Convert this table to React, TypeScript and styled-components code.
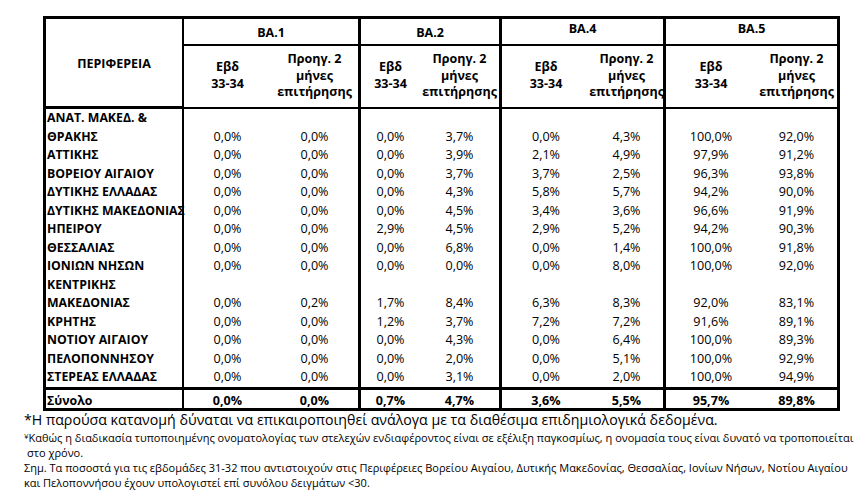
import React from "react";
import styled, { createGlobalStyle, css } from "styled-components";

const GlobalStyle = createGlobalStyle`
  html, body { margin: 0; padding: 0; background: #ffffff; }
  body { font-family: "Open Sans", "Noto Sans", sans-serif; color: #000; }
  * { box-sizing: border-box; }
`;

const Page = styled.div`
  width: 862px;
  height: 496px;
  overflow: hidden;
  padding-top: 16px;
`;

const Table = styled.div`
  margin-left: 43px;
  width: 797px;
  border: 3px solid #000;
  display: grid;
  grid-template-columns: 138px 87px 87px 62px 79px 91px 73px 93px 81px;
  font-size: 12.5px;
`;

const groupBorder = css<{ $start?: boolean }>`
  ${(p) => p.$start && "border-left: 3px solid #000;"}
`;

const RegionHead = styled.div`
  grid-row: span 2;
  border-right: 2px solid #000;
  border-bottom: 3px solid #000;
  display: flex;
  align-items: center;
  justify-content: center;
  font-weight: 700;
  padding-top: 2px;
`;

const GroupHead = styled.div<{ $start?: boolean; $raised?: boolean }>`
  grid-column: span 2;
  height: 27px;
  border-bottom: 2px solid #000;
  ${groupBorder}
  text-align: center;
  font-weight: 700;
  line-height: 20px;
  padding-top: ${(p) => (p.$raised ? "0px" : "4px")};
`;

const SubHead = styled.div<{ $start?: boolean }>`
  height: 63px;
  border-bottom: 2px solid #000;
  ${groupBorder}
  display: flex;
  align-items: center;
  justify-content: center;
  text-align: center;
  font-weight: 700;
  line-height: 16.7px;
  white-space: pre-line;
  padding-bottom: 1px;
`;

const RegionCell = styled.div<{ $total?: boolean }>`
  border-right: 2px solid #000;
  font-weight: 700;
  font-size: 12.3px;
  white-space: pre;
  overflow: visible;
  padding-left: 1px;
  ${(p) =>
    p.$total
      ? css`
          border-top: 3px solid #000;
          height: 21px;
          padding-top: 3px;
          line-height: 15px;
        `
      : css`
          line-height: 18.5px;
        `}
`;

const ValueCell = styled.div<{ $start?: boolean; $total?: boolean }>`
  ${groupBorder}
  display: flex;
  align-items: flex-end;
  justify-content: center;
  font-size: 12.6px;
  ${(p) =>
    p.$total
      ? css`
          border-top: 3px solid #000;
          height: 21px;
          padding-top: 3px;
          line-height: 15px;
          font-weight: 700;
        `
      : css`
          line-height: 18.5px;
        `}
`;

const Notes = styled.div`
  padding-left: 24px;
  white-space: nowrap;
`;

const Note = styled.div<{ $large?: boolean; $indent?: number }>`
  font-size: ${(p) => (p.$large ? "14.2px" : "11px")};
  line-height: ${(p) => (p.$large ? "17px" : "15px")};
  padding-left: ${(p) => p.$indent ?? 0}px;
`;

const Mark = styled.span`
  font-size: 8px;
  vertical-align: 3px;
`;

const groups = [
  { label: "ΒΑ.1", raised: false },
  { label: "ΒΑ.2", raised: false },
  { label: "ΒΑ.4", raised: true },
  { label: "ΒΑ.5", raised: true },
];

const rows: string[][] = [
  ["ΑΝΑΤ. ΜΑΚΕΔ. &\nΘΡΑΚΗΣ", "0,0%", "0,0%", "0,0%", "3,7%", "0,0%", "4,3%", "100,0%", "92,0%"],
  ["ΑΤΤΙΚΗΣ", "0,0%", "0,0%", "0,0%", "3,9%", "2,1%", "4,9%", "97,9%", "91,2%"],
  ["ΒΟΡΕΙΟΥ ΑΙΓΑΙΟΥ", "0,0%", "0,0%", "0,0%", "3,7%", "3,7%", "2,5%", "96,3%", "93,8%"],
  ["ΔΥΤΙΚΗΣ ΕΛΛΑΔΑΣ", "0,0%", "0,0%", "0,0%", "4,3%", "5,8%", "5,7%", "94,2%", "90,0%"],
  ["ΔΥΤΙΚΗΣ ΜΑΚΕΔΟΝΙΑΣ", "0,0%", "0,0%", "0,0%", "4,5%", "3,4%", "3,6%", "96,6%", "91,9%"],
  ["ΗΠΕΙΡΟΥ", "0,0%", "0,0%", "2,9%", "4,5%", "2,9%", "5,2%", "94,2%", "90,3%"],
  ["ΘΕΣΣΑΛΙΑΣ", "0,0%", "0,0%", "0,0%", "6,8%", "0,0%", "1,4%", "100,0%", "91,8%"],
  ["ΙΟΝΙΩΝ ΝΗΣΩΝ", "0,0%", "0,0%", "0,0%", "0,0%", "0,0%", "8,0%", "100,0%", "92,0%"],
  ["ΚΕΝΤΡΙΚΗΣ\nΜΑΚΕΔΟΝΙΑΣ", "0,0%", "0,2%", "1,7%", "8,4%", "6,3%", "8,3%", "92,0%", "83,1%"],
  ["ΚΡΗΤΗΣ", "0,0%", "0,0%", "1,2%", "3,7%", "7,2%", "7,2%", "91,6%", "89,1%"],
  ["ΝΟΤΙΟΥ ΑΙΓΑΙΟΥ", "0,0%", "0,0%", "0,0%", "4,3%", "0,0%", "6,4%", "100,0%", "89,3%"],
  ["ΠΕΛΟΠΟΝΝΗΣΟΥ", "0,0%", "0,0%", "0,0%", "2,0%", "0,0%", "5,1%", "100,0%", "92,9%"],
  ["ΣΤΕΡΕΑΣ ΕΛΛΑΔΑΣ", "0,0%", "0,0%", "0,0%", "3,1%", "0,0%", "2,0%", "100,0%", "94,9%"],
];

const total = ["Σύνολο", "0,0%", "0,0%", "0,7%", "4,7%", "3,6%", "5,5%", "95,7%", "89,8%"];

const isStart = (i: number) => i === 2 || i === 4 || i === 6;

export default function App() {
  return (
    <>
      <GlobalStyle />
      <Page>
        <Table>
          <RegionHead>ΠΕΡΙΦΕΡΕΙΑ</RegionHead>
          {groups.map((g, i) => (
            <GroupHead key={g.label} $start={i > 0} $raised={g.raised}>
              {g.label}
            </GroupHead>
          ))}
          {groups.map((g, i) => (
            <React.Fragment key={g.label + "s"}>
              <SubHead $start={i > 0}>{"Εβδ\n33-34"}</SubHead>
              <SubHead>{"Προηγ. 2\nμήνες\nεπιτήρησης"}</SubHead>
            </React.Fragment>
          ))}
          {rows.map((r) => (
            <React.Fragment key={r[0]}>
              <RegionCell>{r[0]}</RegionCell>
              {r.slice(1).map((v, i) => (
                <ValueCell key={i} $start={isStart(i)}>
                  {v}
                </ValueCell>
              ))}
            </React.Fragment>
          ))}
          <RegionCell $total>{total[0]}</RegionCell>
          {total.slice(1).map((v, i) => (
            <ValueCell key={i} $start={isStart(i)} $total>
              {v}
            </ValueCell>
          ))}
        </Table>
        <Notes>
          <Note $large>
            *Η παρούσα κατανομή δύναται να επικαιροποιηθεί ανάλογα με τα διαθέσιμα επιδημιολογικά δεδομένα.
          </Note>
          <Note>
            <Mark>¥</Mark>Καθώς η διαδικασία τυποποιημένης ονοματολογίας των στελεχών ενδιαφέροντος είναι σε
            εξέλιξη παγκοσμίως, η ονομασία τους είναι δυνατό να τροποποιείται
          </Note>
          <Note $indent={3}>στο χρόνο.</Note>
          <Note>
            Σημ. Τα ποσοστά για τις εβδομάδες 31-32 που αντιστοιχούν στις Περιφέρειες Βορείου Αιγαίου, Δυτικής
            Μακεδονίας, Θεσσαλίας, Ιονίων Νήσων, Νοτίου Αιγαίου
          </Note>
          <Note>και Πελοποννήσου έχουν υπολογιστεί επί συνόλου δειγμάτων &lt;30.</Note>
        </Notes>
      </Page>
    </>
  );
}
